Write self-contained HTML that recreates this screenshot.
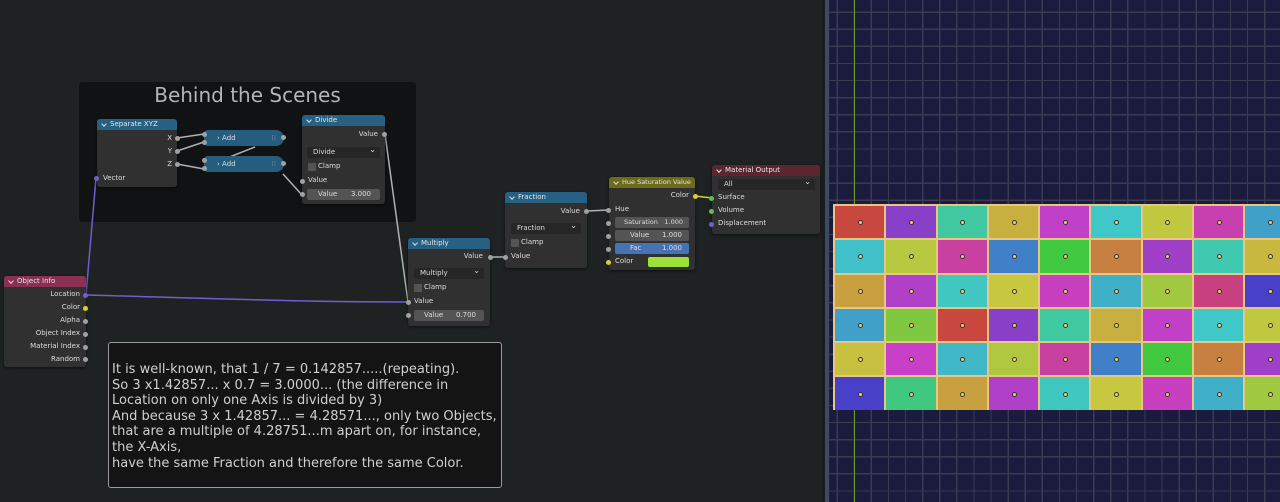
<!DOCTYPE html>
<html><head><meta charset="utf-8"><style>
*{margin:0;padding:0;box-sizing:border-box}
body{width:1280px;height:502px;overflow:hidden;background:#1f2223;font-family:"DejaVu Sans","Liberation Sans",sans-serif;position:relative}
.a{position:absolute}
.node{position:absolute;background:#303030;border-radius:3px;box-shadow:0 1px 3px rgba(0,0,0,.6)}
.hd{height:11px;border-radius:3px 3px 0 0;color:#e6e6e6;font-size:7px;line-height:11px;padding-left:13px;position:relative;white-space:nowrap;overflow:hidden}
.hd:before{content:"";position:absolute;left:5px;top:3px;width:3px;height:3px;border-right:1px solid #ddd;border-bottom:1px solid #ddd;transform:rotate(45deg)}
.t{position:absolute;font-size:7px;color:#ddd;line-height:9px;white-space:nowrap}
.r{text-align:right}
.s{position:absolute;width:5px;height:5px;border-radius:50%;background:#a1a1a1}
.dd{position:absolute;background:#262626;border-radius:2px;height:11px;font-size:7px;color:#ddd;line-height:11px;padding-left:6px}
.dd:after{content:"⌄";position:absolute;right:4px;top:-3px;font-size:8px}
.cb{position:absolute;width:8px;height:8px;background:#545454;border-radius:1px}
.f{position:absolute;background:#545454;border-radius:2px;height:11px;font-size:7px;color:#ddd;line-height:11px;white-space:nowrap}
.f span{position:absolute}
#vp{left:829px;top:0;width:451px;height:502px;background-color:#1b1b3d;
background-image:repeating-linear-gradient(90deg,transparent 0,transparent 7.5px,#3a3a52 7.5px,#3a3a52 8.8px,transparent 8.8px,transparent 17.1px);}
#grid{left:833px;top:204px;width:460px;height:206px;background:#e8c880;display:grid;grid-template-columns:repeat(9,51.3px);grid-template-rows:repeat(6,34.3px);padding:1px 0 0 1px}
#grid div{margin:1px;position:relative}
#grid div:after{content:"";position:absolute;left:50%;top:50%;width:3px;height:3px;margin:-2px;border-radius:50%;background:#f5d070;border:1px solid #333}
</style></head><body>
<div class="a" id="vp"></div>
<div class="a" style="left:829px;top:0;width:451px;height:502px;background-image:repeating-linear-gradient(180deg,transparent 0,transparent 11.5px,#3a3a52 11.5px,#3a3a52 12.8px,transparent 12.8px,transparent 17.1px)"></div>
<div class="a" style="left:854px;top:0;width:1px;height:502px;background:#6a9a20"></div>
<div class="a" style="left:825px;top:0;width:4px;height:502px;background:#3c4c60"></div>
<div class="a" style="left:822px;top:0;width:3px;height:502px;background:#1a1c1d"></div>
<div class="a" id="grid">
<div style="background:#c84840"></div><div style="background:#8840c8"></div><div style="background:#40c8a0"></div><div style="background:#c8b040"></div><div style="background:#c040c8"></div><div style="background:#40c8c8"></div><div style="background:#c0c840"></div><div style="background:#c840b0"></div><div style="background:#40a0c8"></div>
<div style="background:#40c0c8"></div><div style="background:#b8c840"></div><div style="background:#c840a0"></div><div style="background:#4080c8"></div><div style="background:#40c840"></div><div style="background:#c88040"></div><div style="background:#a040c8"></div><div style="background:#40c8b0"></div><div style="background:#c8b840"></div>
<div style="background:#c8a040"></div><div style="background:#b040c8"></div><div style="background:#40c8c0"></div><div style="background:#c8c840"></div><div style="background:#c840c0"></div><div style="background:#40b0c8"></div><div style="background:#a0c840"></div><div style="background:#c84080"></div><div style="background:#4840c8"></div>
<div style="background:#40a0c8"></div><div style="background:#80c840"></div><div style="background:#c84840"></div><div style="background:#8840c8"></div><div style="background:#40c8a0"></div><div style="background:#c8b040"></div><div style="background:#c040c8"></div><div style="background:#40c8c8"></div><div style="background:#c0c840"></div>
<div style="background:#c8c040"></div><div style="background:#c840c8"></div><div style="background:#40b8c8"></div><div style="background:#b0c840"></div><div style="background:#c840a0"></div><div style="background:#4080c8"></div><div style="background:#40c840"></div><div style="background:#c88040"></div><div style="background:#a040c8"></div>
<div style="background:#4840c8"></div><div style="background:#40c880"></div><div style="background:#c8a040"></div><div style="background:#b040c8"></div><div style="background:#40c8c0"></div><div style="background:#c8c840"></div><div style="background:#c840c0"></div><div style="background:#40b0c8"></div><div style="background:#a0c840"></div>
</div>

<!-- frame -->
<div class="a" style="left:79px;top:82px;width:337px;height:140px;background:#111213;border-radius:3px"></div>
<div class="a" style="left:79px;top:83px;width:337px;text-align:center;font-size:20px;color:#b4b4b4">Behind the Scenes</div>

<!-- text box -->
<div class="a" style="left:108px;top:342px;width:394px;height:146px;background:#141414;border:1px solid #9a9a9a;border-radius:3px;font-size:13px;line-height:15.6px;color:#d0d0d0;padding:19px 0 0 3px;white-space:nowrap">It is well-known, that 1 / 7 = 0.142857.....(repeating).<br>So 3 x1.42857... x 0.7 = 3.0000... (the difference in<br>Location on only one Axis is divided by 3)<br>And because 3 x 1.42857... = 4.28571..., only two Objects,<br>that are a multiple of 4.28751...m apart on, for instance,<br>the X-Axis,<br>have the same Fraction and therefore the same Color.</div>

<svg class="a" style="left:0;top:0" width="830" height="502">
<g fill="none" stroke-width="1.5">
<path d="M86 295 C 200 298, 300 302, 408 302" stroke="#6a60d0"/>
<path d="M86 295 L96 178" stroke="#6a60d0"/>
<path d="M385 134 L408 302" stroke="#b0b0b0"/>
<path d="M490 257 L505 257" stroke="#b0b0b0"/>
<path d="M587 211 L609 210" stroke="#b0b0b0"/>
<path d="M695 196 L712 198" stroke="#d8d030"/>
<path d="M177 138 L204 134 M177 151 L204 142 M177 164 L204 169 M283 174 L302 195" stroke="#b0b0b0"/>
<path d="M222 160 L255 147" stroke="#b0b0b0"/>
</g>
</svg>

<!-- Separate XYZ -->
<div class="node" style="left:97px;top:119px;width:80px;height:68px"><div class="hd" style="background:#266082">Separate XYZ</div>
<div class="t r" style="right:5px;top:15px">X</div><div class="t r" style="right:5px;top:28px">Y</div><div class="t r" style="right:5px;top:41px">Z</div><div class="t" style="left:6px;top:55px">Vector</div></div>
<div class="s" style="left:175px;top:136px"></div><div class="s" style="left:175px;top:149px"></div><div class="s" style="left:175px;top:162px"></div><div class="s" style="left:94px;top:176px;background:#6a60d0"></div>
<!-- Add -->
<div class="a" style="left:204px;top:130px;width:80px;height:16px;background:#245d7e;border-radius:4px 9px 9px 4px;font-size:7px;color:#ddd;line-height:16px;padding-left:13px">› Add<span style="position:absolute;right:8px;color:#889">⁞⁞</span></div>
<div class="a" style="left:204px;top:156px;width:80px;height:16px;background:#245d7e;border-radius:4px 9px 9px 4px;font-size:7px;color:#ddd;line-height:16px;padding-left:13px">› Add<span style="position:absolute;right:8px;color:#889">⁞⁞</span></div>
<div class="s" style="left:202px;top:132px"></div><div class="s" style="left:202px;top:140px"></div><div class="s" style="left:281px;top:135px"></div>
<div class="s" style="left:202px;top:158px"></div><div class="s" style="left:202px;top:166px"></div><div class="s" style="left:281px;top:161px"></div>
<!-- Divide -->
<div class="node" style="left:302px;top:115px;width:83px;height:89px"><div class="hd" style="background:#266082">Divide</div>
<div class="t r" style="right:7px;top:15px">Value</div>
<div class="dd" style="left:5px;top:32px;width:73px">Divide</div>
<div class="cb" style="left:6px;top:48px"></div><div class="t" style="left:16px;top:47px">Clamp</div>
<div class="t" style="left:6px;top:61px">Value</div>
<div class="f" style="left:5px;top:74px;width:73px"><span style="left:11px">Value</span><span style="right:9px">3.000</span></div></div>
<div class="s" style="left:382px;top:132px"></div><div class="s" style="left:300px;top:179px"></div><div class="s" style="left:300px;top:192px"></div>
<!-- Multiply -->
<div class="node" style="left:408px;top:238px;width:82px;height:88px"><div class="hd" style="background:#266082">Multiply</div>
<div class="t r" style="right:7px;top:14px">Value</div>
<div class="dd" style="left:6px;top:30px;width:70px">Multiply</div>
<div class="cb" style="left:6px;top:46px"></div><div class="t" style="left:16px;top:45px">Clamp</div>
<div class="t" style="left:6px;top:59px">Value</div>
<div class="f" style="left:6px;top:72px;width:70px"><span style="left:10px">Value</span><span style="right:8px">0.700</span></div></div>
<div class="s" style="left:488px;top:255px"></div><div class="s" style="left:406px;top:300px"></div><div class="s" style="left:406px;top:313px"></div>
<!-- Fraction -->
<div class="node" style="left:505px;top:192px;width:82px;height:76px"><div class="hd" style="background:#266082">Fraction</div>
<div class="t r" style="right:7px;top:15px">Value</div>
<div class="dd" style="left:6px;top:31px;width:70px">Fraction</div>
<div class="cb" style="left:6px;top:47px"></div><div class="t" style="left:16px;top:46px">Clamp</div>
<div class="t" style="left:6px;top:60px">Value</div></div>
<div class="s" style="left:584px;top:209px"></div><div class="s" style="left:503px;top:255px"></div>
<!-- HSV -->
<div class="node" style="left:609px;top:177px;width:86px;height:93px"><div class="hd" style="background:#6b6b1a;font-size:6.5px">Hue Saturation Value</div>
<div class="t r" style="right:6px;top:14px">Color</div>
<div class="t" style="left:6px;top:28px">Hue</div>
<div class="f" style="left:6px;top:40px;width:74px;font-size:6.5px"><span style="left:9px">Saturation</span><span style="right:6px">1.000</span></div>
<div class="f" style="left:6px;top:53px;width:74px"><span style="left:15px">Value</span><span style="right:7px">1.000</span></div>
<div class="f" style="left:6px;top:66px;width:74px;background:#4772b3"><span style="left:15px">Fac</span><span style="right:7px">1.000</span></div>
<div class="t" style="left:6px;top:80px">Color</div>
<div class="a" style="left:39px;top:80px;width:41px;height:10px;background:#9de03a;border-radius:2px"></div></div>
<div class="s" style="left:693px;top:194px;background:#d8d030"></div><div class="s" style="left:606px;top:208px"></div><div class="s" style="left:606px;top:221px"></div><div class="s" style="left:606px;top:234px"></div><div class="s" style="left:606px;top:247px"></div><div class="s" style="left:606px;top:260px;background:#d8d030"></div>
<!-- Material Output -->
<div class="node" style="left:712px;top:165px;width:108px;height:69px"><div class="hd" style="background:#5c2630">Material Output</div>
<div class="dd" style="left:6px;top:14px;width:97px">All</div>
<div class="t" style="left:6px;top:28px">Surface</div><div class="t" style="left:6px;top:41px">Volume</div><div class="t" style="left:6px;top:54px">Displacement</div></div>
<div class="s" style="left:709px;top:196px;background:#5cc050"></div><div class="s" style="left:709px;top:209px;background:#5cc050"></div><div class="s" style="left:709px;top:222px;background:#6a60d0"></div>
<!-- Object Info -->
<div class="node" style="left:4px;top:276px;width:82px;height:91px"><div class="hd" style="background:#8a3050">Object Info</div>
<div class="t r" style="right:6px;top:14px">Location</div>
<div class="t r" style="right:6px;top:27px">Color</div>
<div class="t r" style="right:6px;top:40px">Alpha</div>
<div class="t r" style="right:6px;top:53px">Object Index</div>
<div class="t r" style="right:6px;top:66px">Material Index</div>
<div class="t r" style="right:6px;top:79px">Random</div></div>
<div class="s" style="left:83px;top:293px;background:#6a60d0"></div><div class="s" style="left:83px;top:306px;background:#d8d030"></div><div class="s" style="left:83px;top:319px"></div><div class="s" style="left:83px;top:332px"></div><div class="s" style="left:83px;top:345px"></div><div class="s" style="left:83px;top:357px"></div>
</body></html>
